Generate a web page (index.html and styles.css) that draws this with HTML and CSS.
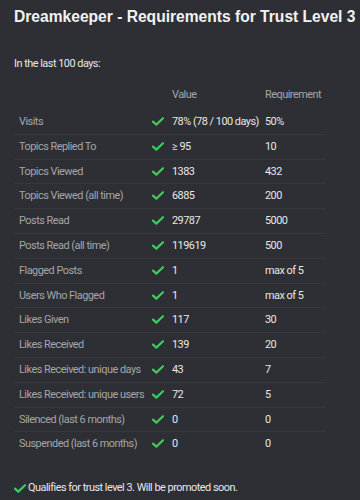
FILE: index.html
```html
<!DOCTYPE html>
<html>
<head>
<meta charset="utf-8">
<link rel="stylesheet" href="styles.css">
</head>
<body>
<div class="page">
  <h1 class="title">Dreamkeeper - Requirements for Trust Level 3</h1>
  <p class="intro">In the last 100 days:</p>
  <table class="req">
    <colgroup>
      <col class="c-label"><col class="c-check"><col class="c-value"><col class="c-req">
    </colgroup>
    <thead>
      <tr><th></th><th></th><th>Value</th><th>Requirement</th></tr>
    </thead>
    <tbody>
      <tr><td class="lbl">Visits</td><td class="chk"><svg class="tick" viewBox="0 0 12 9"><path d="M1 4.6 L4.3 7.6 L11 1.2"/></svg></td><td>78% (78 / 100 days)</td><td>50%</td></tr>
      <tr><td class="lbl">Topics Replied To</td><td class="chk"><svg class="tick" viewBox="0 0 12 9"><path d="M1 4.6 L4.3 7.6 L11 1.2"/></svg></td><td>≥ 95</td><td>10</td></tr>
      <tr><td class="lbl">Topics Viewed</td><td class="chk"><svg class="tick" viewBox="0 0 12 9"><path d="M1 4.6 L4.3 7.6 L11 1.2"/></svg></td><td>1383</td><td>432</td></tr>
      <tr><td class="lbl">Topics Viewed (all time)</td><td class="chk"><svg class="tick" viewBox="0 0 12 9"><path d="M1 4.6 L4.3 7.6 L11 1.2"/></svg></td><td>6885</td><td>200</td></tr>
      <tr><td class="lbl">Posts Read</td><td class="chk"><svg class="tick" viewBox="0 0 12 9"><path d="M1 4.6 L4.3 7.6 L11 1.2"/></svg></td><td>29787</td><td>5000</td></tr>
      <tr><td class="lbl">Posts Read (all time)</td><td class="chk"><svg class="tick" viewBox="0 0 12 9"><path d="M1 4.6 L4.3 7.6 L11 1.2"/></svg></td><td>119619</td><td>500</td></tr>
      <tr><td class="lbl">Flagged Posts</td><td class="chk"><svg class="tick" viewBox="0 0 12 9"><path d="M1 4.6 L4.3 7.6 L11 1.2"/></svg></td><td>1</td><td>max of 5</td></tr>
      <tr><td class="lbl">Users Who Flagged</td><td class="chk"><svg class="tick" viewBox="0 0 12 9"><path d="M1 4.6 L4.3 7.6 L11 1.2"/></svg></td><td>1</td><td>max of 5</td></tr>
      <tr><td class="lbl">Likes Given</td><td class="chk"><svg class="tick" viewBox="0 0 12 9"><path d="M1 4.6 L4.3 7.6 L11 1.2"/></svg></td><td>117</td><td>30</td></tr>
      <tr><td class="lbl">Likes Received</td><td class="chk"><svg class="tick" viewBox="0 0 12 9"><path d="M1 4.6 L4.3 7.6 L11 1.2"/></svg></td><td>139</td><td>20</td></tr>
      <tr><td class="lbl">Likes Received: unique days</td><td class="chk"><svg class="tick" viewBox="0 0 12 9"><path d="M1 4.6 L4.3 7.6 L11 1.2"/></svg></td><td>43</td><td>7</td></tr>
      <tr><td class="lbl">Likes Received: unique users</td><td class="chk"><svg class="tick" viewBox="0 0 12 9"><path d="M1 4.6 L4.3 7.6 L11 1.2"/></svg></td><td>72</td><td>5</td></tr>
      <tr><td class="lbl">Silenced (last 6 months)</td><td class="chk"><svg class="tick" viewBox="0 0 12 9"><path d="M1 4.6 L4.3 7.6 L11 1.2"/></svg></td><td>0</td><td>0</td></tr>
      <tr class="last"><td class="lbl">Suspended (last 6 months)</td><td class="chk"><svg class="tick" viewBox="0 0 12 9"><path d="M1 4.6 L4.3 7.6 L11 1.2"/></svg></td><td>0</td><td>0</td></tr>
    </tbody>
  </table>
  <p class="footer"><svg class="tick" viewBox="0 0 12 9"><path d="M1 4.6 L4.3 7.6 L11 1.2"/></svg>Qualifies for trust level 3. Will be promoted soon.</p>
</div>
</body>
</html>
```

FILE: styles.css
```css
html, body {
  margin: 0;
  padding: 0;
  background: #2e2f34;
}
.page {
  padding: 0 14px;
  color: #e8e8ea;
  font-family: "Roboto", "Noto Sans", sans-serif;
  font-size: 10.9px;
  letter-spacing: -0.5px;
}
.title {
  margin: 0;
  padding-top: 6px;
  font-family: "Liberation Sans", Arial, sans-serif;
  font-weight: bold;
  font-size: 15.6px;
  line-height: 22px;
  letter-spacing: 0;
  color: #f2f2f3;
  white-space: nowrap;
}
.intro {
  margin: 0;
  padding-top: 28px;
  line-height: 16px;
}
.req {
  margin-top: 10.5px;
  width: 312px;
  border-collapse: collapse;
  table-layout: fixed;
}
.c-label { width: 133px; }
.c-check { width: 20px; }
.c-value { width: 93px; }
.c-req { width: 66px; }
.req th {
  text-align: left;
  font-weight: normal;
  color: #a5a6aa;
  padding: 4px 5px 7.5px;
  line-height: 16px;
}
.req td {
  padding: 4px 5px;
  line-height: 15.8px;
  border-bottom: 1px solid #37383d;
  white-space: nowrap;
}
.req tr.last td { border-bottom: none; }
.req td.lbl { color: #a5a6aa; }
.req td.chk { padding: 4px 0 4px 5px; }
.tick {
  width: 12px;
  height: 9px;
  display: inline-block;
  vertical-align: -1px;
  fill: none;
  stroke: #3ecb5d;
  stroke-width: 2.2;
  stroke-linecap: round;
  stroke-linejoin: round;
}
.footer {
  margin: 0;
  padding-top: 24px;
  line-height: 16px;
  display: flex;
  align-items: center;
  gap: 2px;
}
```
